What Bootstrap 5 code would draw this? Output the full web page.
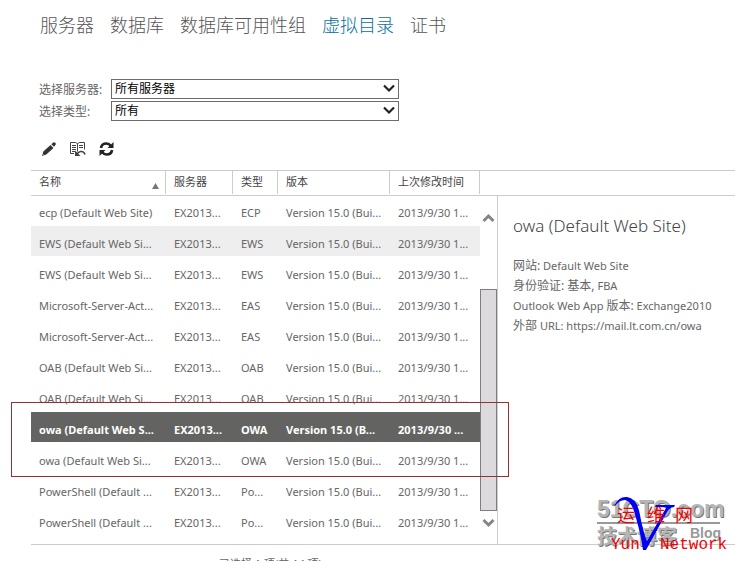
<!DOCTYPE html>
<html lang="zh-CN">
<head>
<meta charset="utf-8">
<meta name="viewport" content="width=device-width, initial-scale=1">
<title>虚拟目录</title>
<link href="https://cdn.jsdelivr.net/npm/bootstrap@5.3.0/dist/css/bootstrap.min.css" rel="stylesheet">
<style>
body{font-family:"Noto Sans","Noto Sans CJK SC",sans-serif;font-size:11px;line-height:20px;color:#666;background:#fff;overflow:hidden}
.tabs{gap:16px;padding:12px 0 0 40px;font-size:18px;line-height:26px;font-weight:300}
.tabs a{color:#555;text-decoration:none}
.tabs a.active{color:#0a6f9c}
.filters{padding:41px 0 0 39px;font-size:12px;row-gap:2px}
.filters label{width:72px;line-height:22px;height:20px}
.filters .form-select{width:288px;height:20px;padding:0 20px 0 3px;font-size:12px;line-height:18px;color:#000;border:1px solid #6b6b70;border-radius:0;background-position:right 2px top 4px;background-size:14px 10px;
background-image:url("data:image/svg+xml,%3Csvg xmlns='http://www.w3.org/2000/svg' viewBox='0 0 14 10'%3E%3Cpath d='M2 1.5l5 5 5-5' fill='none' stroke='%23222' stroke-width='2.2'/%3E%3C/svg%3E")}
.tools{gap:12px;padding:19px 0 0 40px;height:49px}
.tools button{width:17px;height:18px;padding:0;border:0;background:none;line-height:0}
.listing{margin-left:31px;border-top:1px solid #ccc;border-bottom:1px solid #ccc;min-height:375px}
.grid-table{table-layout:fixed;width:449px;border-collapse:separate;border-spacing:0}
.grid-table th{height:25px;padding:0 0 2px 8px;font-weight:400;color:#444;line-height:22px;border-bottom:1px solid #ccc;position:relative}
.grid-table th::after{content:"";position:absolute;right:0;top:0;bottom:1px;border-right:1px solid #ccc}
.grid-table td{height:31px;padding:5px 0 0 8px;line-height:24px;border-bottom:1px solid transparent;background-clip:padding-box;white-space:nowrap;overflow:hidden}
.grid-table tr:first-child td{height:30px;padding-top:4px}
.grid-table .hovered td{background-color:#eee}
.grid-table .selected td{background-color:#636462;color:#fff;font-weight:700}
.sort-mark{position:absolute;right:7px;bottom:6px}
.head-rest{height:25px;border-bottom:1px solid #ccc}
.scroller{width:18px;border-right:1px solid #ccc;padding:17px 0 16px}
.thumb{width:17px;height:222px;margin-top:auto;margin-bottom:7px;background:#dcdadd;border:1px solid #7d7d82}
.details{padding:17px 0 0 15px}
.details h2{font-size:17px;line-height:26px;font-weight:300;margin:0 0 17px;color:#444}
.details p{margin:0}
.zh{font-size:12px}
.annotation{left:-20px;top:231px;width:498px;height:75px;border:1px solid #963034}
.watermark{right:0;top:310px}
.status{padding:9px 0 0 219px;height:16px}
</style>
<script src="https://cdn.jsdelivr.net/npm/bootstrap@5.3.0/dist/js/bootstrap.bundle.min.js"></script>
</head>
<body>
<nav class="tabs d-flex">
<a href="#">服务器</a><a href="#">数据库</a><a href="#">数据库可用性组</a><a href="#" class="active">虚拟目录</a><a href="#">证书</a>
</nav>
<form class="filters d-flex flex-column">
<div class="d-flex"><label for="server">选择服务器:</label><select id="server" class="form-select"><option>所有服务器</option></select></div>
<div class="d-flex"><label for="kind">选择类型:</label><select id="kind" class="form-select"><option>所有</option></select></div>
</form>
<div class="tools d-flex">
<button type="button" aria-label="编辑"><svg width="17" height="18" viewBox="0 0 17 18"><path d="M2 16l1.300-4.500 7.200-6.500 3 3-7.200 6.500zM11.300 4.200l2-1.800q1-.5 2 .4t.3 2l-1.600 2z" fill="#333"/><path d="M3.500 14.700l-.8-.8" stroke="#fff"/></svg></button>
<button type="button" aria-label="查看"><svg width="17" height="18" viewBox="0 0 17 18" fill="none" stroke="#444"><path d="M5 13.500H1.500v-11h5l2 1 2-1h5v7M8.500 3.500v8M3 5.500h4M3 7.500h4M3 9.500h4M3 11.500h3M10 5.500h4M10 7.500h4"/><path d="M16 14.500q-1-3.500-4.500-3-2 .3-3.500 2.500" stroke-width="1.600"/><path d="M6 10.500v5.500h5.500z" fill="#444" stroke="none"/></svg></button>
<button type="button" aria-label="刷新"><svg width="17" height="18" viewBox="0 0 17 18" fill="none" stroke="#222" stroke-width="2.600"><path d="M3 8q.5-4.500 5.500-4.500 2.500 0 4.500 2.500M14 10q-.5 4.500-5.500 4.500-2.500 0-4.500-2.500"/><path d="M15.500 2v6H9.500zM1.500 16v-6h6z" fill="#222" stroke="none"/></svg></button>
</div>
<main class="position-relative">
<div class="listing d-flex position-relative">
<table class="grid-table flex-shrink-0 align-self-start">
<colgroup><col style="width:135px"><col style="width:67px"><col style="width:45px"><col style="width:112px"><col style="width:90px"></colgroup>
<thead><tr><th>名称<svg class="sort-mark" width="7" height="6" viewBox="0 0 7 6"><path d="M3.500 0L7 6H0z" fill="#777"/></svg></th><th>服务器</th><th>类型</th><th>版本</th><th>上次修改时间</th></tr></thead>
<tbody>
<tr><td>ecp (Default Web Site)</td><td>EX2013...</td><td>ECP</td><td>Version 15.0 (Bui...</td><td>2013/9/30 1...</td></tr>
<tr class="hovered"><td>EWS (Default Web Si...</td><td>EX2013...</td><td>EWS</td><td>Version 15.0 (Bui...</td><td>2013/9/30 1...</td></tr>
<tr><td>EWS (Default Web Si...</td><td>EX2013...</td><td>EWS</td><td>Version 15.0 (Bui...</td><td>2013/9/30 1...</td></tr>
<tr><td>Microsoft-Server-Act...</td><td>EX2013...</td><td>EAS</td><td>Version 15.0 (Bui...</td><td>2013/9/30 1...</td></tr>
<tr><td>Microsoft-Server-Act...</td><td>EX2013...</td><td>EAS</td><td>Version 15.0 (Bui...</td><td>2013/9/30 1...</td></tr>
<tr><td>OAB (Default Web Si...</td><td>EX2013...</td><td>OAB</td><td>Version 15.0 (Bui...</td><td>2013/9/30 1...</td></tr>
<tr><td>OAB (Default Web Si...</td><td>EX2013...</td><td>OAB</td><td>Version 15.0 (Bui...</td><td>2013/9/30 1...</td></tr>
<tr class="selected"><td>owa (Default Web S...</td><td>EX2013...</td><td>OWA</td><td>Version 15.0 (B...</td><td>2013/9/30 ...</td></tr>
<tr><td>owa (Default Web Si...</td><td>EX2013...</td><td>OWA</td><td>Version 15.0 (Bui...</td><td>2013/9/30 1...</td></tr>
<tr><td>PowerShell (Default ...</td><td>EX2013...</td><td>Po...</td><td>Version 15.0 (Bui...</td><td>2013/9/30 1...</td></tr>
<tr><td>PowerShell (Default ...</td><td>EX2013...</td><td>Po...</td><td>Version 15.0 (Bui...</td><td>2013/9/30 1...</td></tr>
</tbody>
</table>
<div class="d-flex flex-column flex-grow-1">
<div class="head-rest"></div>
<div class="d-flex flex-grow-1">
<div class="scroller d-flex flex-column flex-shrink-0 align-items-start">
<svg width="17" height="10" viewBox="0 0 17 10"><path d="M3.500 8l5-5 5 5" fill="none" stroke="#858585" stroke-width="3"/></svg>
<div class="thumb"></div>
<svg width="17" height="10" viewBox="0 0 17 10"><path d="M3.500 2l5 5 5-5" fill="none" stroke="#858585" stroke-width="3"/></svg>
</div>
<section class="details">
<h2>owa (Default Web Site)</h2>
<p><span class="zh">网站:</span> Default Web Site</p>
<p><span class="zh">身份验证: 基本,</span> FBA</p>
<p>Outlook Web App <span class="zh">版本:</span> Exchange2010</p>
<p><span class="zh">外部</span> URL: https://mail.lt.com.cn/owa</p>
</section>
</div>
</div>
<div class="annotation position-absolute"></div>
</div>
<svg class="watermark position-absolute" width="150" height="81" viewBox="0 0 150 81">
<g font-family="'Liberation Sans',sans-serif" font-weight="700" font-size="23">
<text x="13" y="38" fill="#777">51CTO.com</text><text x="12" y="37" fill="#b5b5b5">51CTO.com</text></g>
<path d="M12 43h123" stroke="#999" stroke-width="2"/>
<g font-family="'Noto Sans CJK SC',sans-serif" font-weight="700" font-size="20"><text x="13" y="65" fill="#777">技术博客</text><text x="12" y="64" fill="#b5b5b5">技术博客</text></g>
<g font-family="'Liberation Sans',sans-serif" font-weight="700" font-size="14"><text x="105" y="58" fill="#999">Blog</text></g>
<path d="M29 26Q34 16 42 17Q52 18 55 35Q58 52 62 61L81 28Q80 27 74 27L70 27L71 25H90L89 27Q85 27 82 32L61 70H58Q56 55 51 38Q47 21 40 20Q34 20 30 26Z" fill="#0000f5"/>
<g fill="#f00000" font-family="'Noto Sans CJK SC',sans-serif" font-size="18"><text x="32" y="42">运</text><text x="62" y="42">维</text><text x="90" y="42">网</text></g>
<g fill="#f00000" font-family="'Liberation Mono',monospace" font-size="16"><text x="26" y="69">Yun</text><text x="75" y="69">Network</text></g>
</svg>
</main>
<footer class="status">已选择 1 项(共 14 项)</footer>
</body>
</html>
